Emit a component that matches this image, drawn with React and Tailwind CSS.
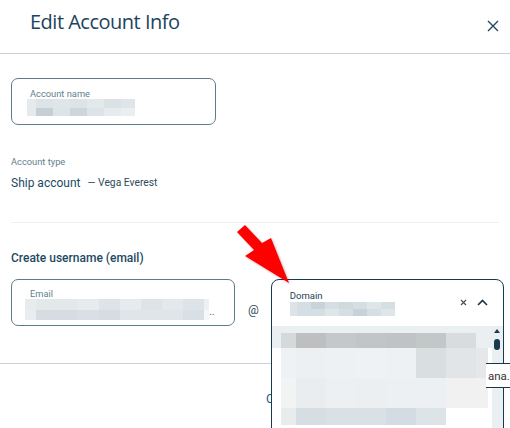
import React from 'react'

const NAME_BLUR = [
  { h: 9, cells: [[9, '#e6eaed'], [17, '#dde3e7'], [17, '#dfe5e8'], [17, '#dde3e7'], [17, '#e3e8eb'], [17, '#dbe2e6'], [14, '#dfe5e9']] },
  { h: 8, cells: [[9, '#e6eaed'], [17, '#c5d0d6'], [17, '#dde4e8'], [17, '#cdd6dc'], [17, '#dde4e8'], [17, '#e6ebee'], [14, '#e9eef0']] },
]

const EMAIL_BLUR = [
  { h: 11, cells: [[11, '#e6ebed'], [21, '#e3e8eb'], [21, '#e3e8eb'], [21, '#e6ebed'], [21, '#dde3e7'], [21, '#e6ebed'], [21, '#dde3e7'], [21, '#e3e8eb'], [21, '#dde3e7'], [5, '#eef1f3']] },
  { h: 10, cells: [[11, '#e9edef'], [21, '#d5dde2'], [21, '#d5dde2'], [21, '#d9e0e5'], [21, '#d5dde2'], [21, '#dfe5e8'], [21, '#dfe5e8'], [21, '#dfe5e8'], [21, '#d9e0e5'], [5, '#f6f7f8']] },
]

const DOMAIN_BLUR = [
  { h: 7, cells: [[7, '#dde4e8'], [14, '#d5dee3'], [14, '#c6d3da'], [14, '#d5dee3'], [14, '#cfd9de'], [14, '#d5dee3'], [14, '#dfe6ea'], [14, '#d5dee3']] },
  { h: 7, cells: [[7, '#dde4e8'], [14, '#d5dee3'], [14, '#d5dee3'], [14, '#dfe6ea'], [14, '#d5dee3'], [14, '#c6d3d9'], [14, '#d5dee3'], [14, '#dfe6ea']] },
]

const LIST_BLUR = [
  { h: 15, cells: [[15, '#d5d9da'], [30, '#bdbfc1'], [30, '#c4c8ca'], [30, '#c1c5c7'], [30, '#bfc3c5'], [30, '#c2c7c7'], [30, '#d8dcdf']] },
  { h: 30, cells: [[15, '#eef2f4'], [30, '#ecf0f2'], [30, '#edf1f4'], [30, '#eef2f5'], [30, '#edf1f4'], [30, '#d9dee1'], [30, '#e2e5e8'], [12, '#e5e7e9']] },
  { h: 30, cells: [[15, '#f2f4f3'], [30, '#e9edf0'], [30, '#ecf0f3'], [30, '#ebeff2'], [30, '#ecf0f3'], [30, '#edf0f2'], [30, '#f1f1f2'], [12, '#f1f1f2']] },
  { h: 17, cells: [[15, '#e9eced'], [30, '#d6dee3'], [30, '#d9e1e6'], [30, '#d9e1e6'], [30, '#d3dce2'], [30, '#dde4e8']] },
]

// pixelated placeholder for redacted values
function Blur({ rows }) {
  return (
    <div className="flex flex-col">
      {rows.map((row, i) => (
        <div key={i} className="flex" style={{ height: row.h }}>
          {row.cells.map(([w, c], j) => (
            <div key={j} style={{ width: w, background: c }} />
          ))}
        </div>
      ))}
    </div>
  )
}

function DomainSelect() {
  return (
    <div className="relative shrink-0 w-[233px] h-[47px]">
      <div className="absolute left-0 top-0 z-10 w-[233px] h-[160px] bg-white border-[1.5px] border-[#163a4f] rounded-t-[8px] flex flex-col overflow-hidden">
        {/* field */}
        <div className="h-[46px] flex items-start justify-between pl-[18px] pr-[15px] pt-[10px]">
          <div className="flex flex-col">
            <span className="text-[9.5px] leading-[12px] text-[#243f52]">Domain</span>
            <Blur rows={DOMAIN_BLUR} />
          </div>
          <div className="flex items-center gap-[10px] mt-[9px]">
            <svg width="7" height="7" viewBox="0 0 7 7" className="text-[#3b4f5d]">
              <path d="M1 1 L6 6 M6 1 L1 6" stroke="currentColor" strokeWidth="1.1" fill="none" />
            </svg>
            <svg width="11" height="7" viewBox="0 0 11 7" className="text-[#1d3446]">
              <path d="M1 6 L5.5 1.5 L10 6" stroke="currentColor" strokeWidth="1.6" fill="none" />
            </svg>
          </div>
        </div>
        {/* options */}
        <div className="relative flex-1 flex">
          <div className="flex-1 flex flex-col">
            <div className="h-[22px] bg-[#eaeff2]" />
          </div>
          <div className="w-[11px] bg-[#eaeff2] flex flex-col items-center pt-[3px]">
            <div className="w-0 h-0 border-l-[3px] border-r-[3px] border-b-[4px] border-l-transparent border-r-transparent border-b-[#1b3a4e]" />
            <div className="mt-[6px] w-[6px] h-[11px] rounded-full bg-[#1b3a4e]" />
          </div>
          <div className="absolute left-[9px] top-[7px]">
            <Blur rows={LIST_BLUR} />
          </div>
        </div>
      </div>
    </div>
  )
}

export default function App() {
  return (
    <div className="relative w-[510px] h-[428px] overflow-hidden bg-white" style={{ fontFamily: 'Roboto, "Liberation Sans", sans-serif' }}>
      {/* Header */}
      <div className="h-[54px] border-b border-[#c7d0d8] flex items-start justify-between pl-[30px] pr-[11px] pt-[10px]">
        <h1 className="text-[20px] leading-[24px] tracking-[-0.5px] text-[#1c4460]" style={{ fontFamily: '"Open Sans", sans-serif' }}>Edit Account Info</h1>
        <svg width="12" height="12" viewBox="0 0 12 12" className="mt-[10px] text-[#24485f]">
          <path d="M1 1 L11 11 M11 1 L1 11" stroke="currentColor" strokeWidth="1.4" fill="none" />
        </svg>
      </div>

      {/* Body */}
      <div className="px-[11px]">
        <div className="mt-[24px] w-[205px] h-[47px] rounded-[7px] border border-[#5d7c89] pl-[15px] pt-[10px]">
          <div className="ml-[3px] text-[9.3px] leading-[10px] text-[#5f7f8c]">Account name</div>
          <Blur rows={NAME_BLUR} />
        </div>

        <div className="mt-[31px] text-[9.3px] leading-[12px] text-[#5f7f8c]">Account type</div>
        <div className="mt-[7px] flex items-center">
          <span className="text-[12px] leading-[16px] text-[#1d4a63]">Ship account</span>
          <span className="ml-[7px] text-[10.3px] leading-[16px] text-[#2f4a5a]">— Vega Everest</span>
        </div>

        <div className="mt-[31px] border-t border-[#eef0f2]" />

        <div className="mt-[27px] text-[12px] leading-[16px] font-medium text-[#1d4a63]">Create username (email)</div>

        <div className="mt-[13px] flex items-start">
          <div className="shrink-0 w-[224px] h-[47px] rounded-[7px] border border-[#5d7c89] pl-[13px] pt-[9px]">
            <div className="ml-[5px] text-[9.3px] leading-[10px] text-[#5f7f8c]">Email</div>
            <div className="flex items-end">
              <Blur rows={EMAIL_BLUR} />
              <span className="text-[10px] leading-[10px] text-[#4a5d68] mb-[3px]">..</span>
            </div>
          </div>
          <span className="shrink-0 ml-[13px] mr-[12px] mt-[23px] text-[12px] leading-[16px] text-[#2f4a5a]">@</span>
          <DomainSelect />
        </div>
      </div>

      {/* Footer */}
      <div className="mt-[37px] border-t border-[#c9d1d7] flex justify-end items-center gap-[12px] pr-[11px] pt-[17px]">
        <button className="w-[41px] text-left text-[12.5px] leading-[16px] text-[#1d5a7a]">Cancel</button>
        <button className="w-[180px] h-[36px] rounded-[6px] bg-[#1d4a63] text-white text-[13px]">Save</button>
      </div>

      {/* Tooltip */}
      <div className="absolute left-[486px] top-[363px] z-20 h-[25px] w-[40px] bg-white border-y border-[#1d3444] pl-[2px] flex items-center">
        <span className="text-[11.5px] text-[#333] leading-[16px]">ana.</span>
      </div>

      {/* Annotation arrow */}
      <svg className="absolute left-0 top-0 z-30 pointer-events-none" width="510" height="428" viewBox="0 0 510 428">
        <defs>
          <filter id="sh" x="-20%" y="-20%" width="140%" height="140%">
            <feDropShadow dx="1" dy="1" stdDeviation="1" floodColor="#000" floodOpacity="0.3" />
          </filter>
        </defs>
        <polygon
          points="237,232 245,225 262,243 271,238 289,283 245,256 254,250"
          fill="#ff0000"
          filter="url(#sh)"
        />
      </svg>
    </div>
  )
}
